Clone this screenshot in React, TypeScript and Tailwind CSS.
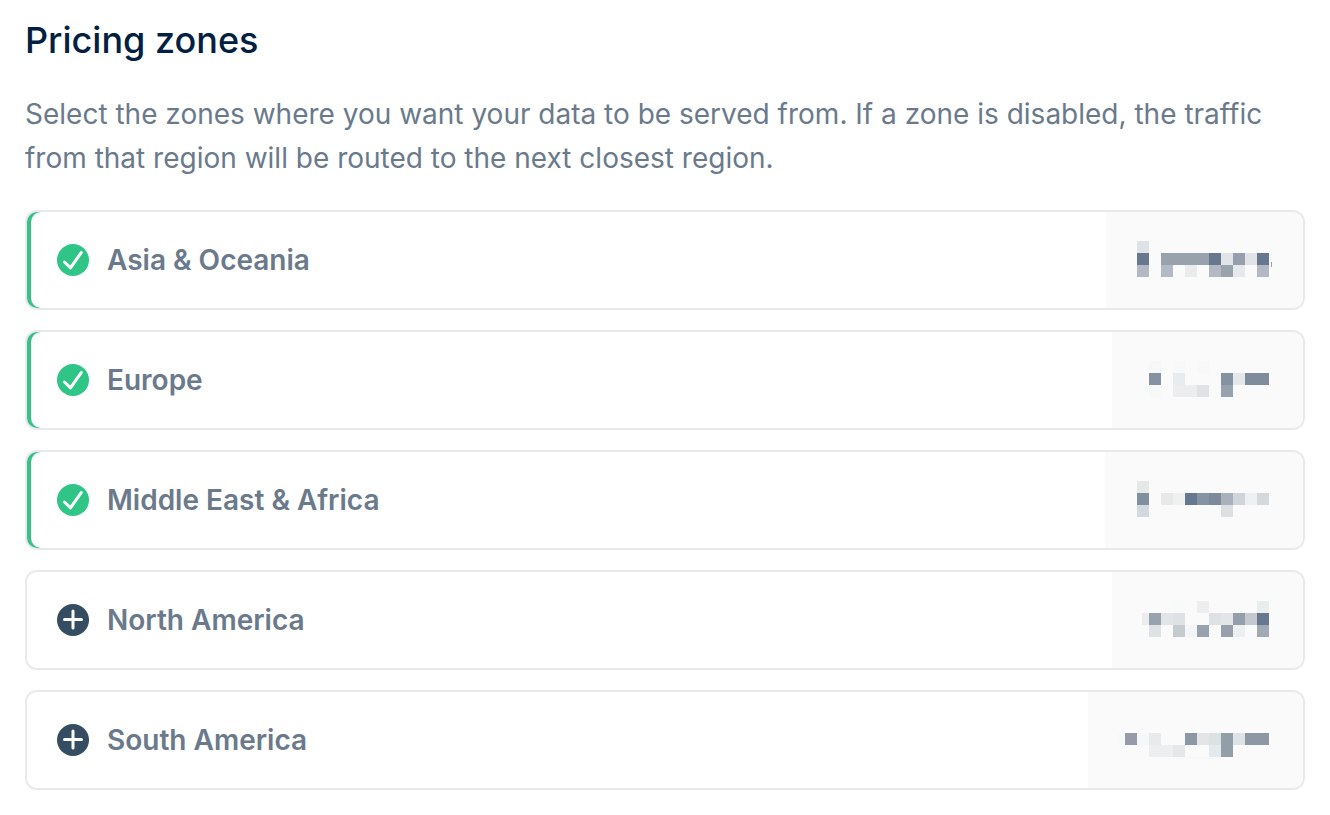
import { useState } from "react";

type Cell = [col: number, row: number, fill: string, span?: number];

type Zone = {
  id: string;
  name: string;
  enabled: boolean;
  priceWidth: number;
  price: Cell[];
  // sliver of the last glyph that sticks out of the mosaic
  sliver?: boolean;
};

const CELL = 12;
// distance from column 0 to the right edge of the price
const MOSAIC_WIDTH = 160;

const ZONES: Zone[] = [
  {
    id: "asia",
    name: "Asia & Oceania",
    enabled: true,
    priceWidth: 137,
    sliver: true,
    price: [
      [2, 0, "#dee3e5"],
      [2, 1, "#66778f"], [4, 1, "#98a2ad", 4], [8, 1, "#66778f"], [9, 1, "#e1e5e7"],
      [10, 1, "#989fac"], [11, 1, "#e1e4e7"], [12, 1, "#66778f"],
      [2, 2, "#b2b9c4"], [4, 2, "#b2bac5"], [6, 2, "#e9ebed"], [8, 2, "#b2b9c4"],
      [9, 2, "#98a3ad"], [10, 2, "#e5e9ed"], [12, 2, "#b2b8c4"],
    ],
  },
  {
    id: "europe",
    name: "Europe",
    enabled: true,
    priceWidth: 131,
    price: [
      [3, 0, "#f6f8f8"], [5, 0, "#f8f8f8"], [7, 0, "#f7f8f8"],
      [3, 1, "#8592a1"], [5, 1, "#e9ecee"], [9, 1, "#8592a1"], [10, 1, "#e4e8ea"], [11, 1, "#7f8c9b", 2],
      [3, 2, "#f7f9f9"], [5, 2, "#ebedef", 2], [7, 2, "#e0e2e5"], [9, 2, "#98a1ae"],
    ],
  },
  {
    id: "mea",
    name: "Middle East & Africa",
    enabled: true,
    priceWidth: 138,
    price: [
      [2, 0, "#e6e8e8"],
      [2, 1, "#7f8f9f"], [4, 1, "#e7e9e9"], [5, 1, "#eff1f1"], [6, 1, "#66778f"], [7, 1, "#8594a3"],
      [8, 1, "#7c8a99"], [9, 1, "#a8b1bc"], [10, 1, "#d0d5db"], [11, 1, "#eef0f1"], [12, 1, "#d5d9db"],
      [2, 2, "#d2d8df"], [9, 2, "#dde0e3"],
    ],
  },
  {
    id: "na",
    name: "North America",
    enabled: false,
    priceWidth: 131,
    price: [
      [5, 0, "#f8f9f9"], [7, 0, "#eceeef"], [12, 0, "#eaedee"],
      [2, 1, "#eceeee"], [3, 1, "#98a1ae"], [4, 1, "#e2e5e7"], [5, 1, "#dfe2e4"], [8, 1, "#dfe1e4"],
      [9, 1, "#e2e6e8"], [10, 1, "#959eab"], [11, 1, "#c4c9ce"], [12, 1, "#66778f"],
      [3, 2, "#dfe2e5"], [5, 2, "#c6cbd0"], [6, 2, "#f3f5f6"], [7, 2, "#98a2ae"],
      [9, 2, "#989faa"], [10, 2, "#edf0f3"], [12, 2, "#a0aab5"],
    ],
  },
  {
    id: "sa",
    name: "South America",
    enabled: false,
    priceWidth: 155,
    price: [
      [0, 1, "#f7f8f9"], [1, 1, "#959ca8"], [2, 1, "#f6f7f9"], [3, 1, "#e8eaec"], [6, 1, "#8c98a3"],
      [7, 1, "#e3e5e7"], [8, 1, "#dce1e3"], [9, 1, "#929ea8"], [10, 1, "#dfe3e7"], [11, 1, "#8d98a3", 2],
      [3, 2, "#eceef0", 2], [5, 2, "#e5e7ea"], [8, 2, "#e4e9ec"], [9, 2, "#929ea8"],
      [5, 3, "#f8f8f9", 4],
    ],
  },
];

function ZoneIcon({ enabled }: { enabled: boolean }) {
  return (
    <svg
      viewBox="0 0 32 32"
      className={`size-8 shrink-0 ${enabled ? "text-[#2fc586]" : "text-[#344d63]"}`}
      fill="none"
      strokeLinecap="round"
      aria-hidden="true"
    >
      <circle cx="16" cy="16" r="16" fill="currentColor" />
      {enabled ? (
        <path d="M7.4 18L13.5 23.8L24.2 8.6" stroke="#fff" strokeWidth="3" strokeLinejoin="round" />
      ) : (
        <path d="M16 7V24M7.5 15.5H24.5" stroke="#fff" strokeWidth="3" />
      )}
    </svg>
  );
}

function HiddenPrice({ width, cells, sliver }: { width: number; cells: Cell[]; sliver?: boolean }) {
  return (
    <svg
      width={width}
      height={38}
      viewBox={`${MOSAIC_WIDTH - width} 0 ${width} 38`}
      shapeRendering="crispEdges"
      aria-hidden="true"
    >
      {cells.map(([col, row, fill, span = 1]) => (
        <rect key={`${col}-${row}`} x={col * CELL} y={row * CELL} width={span * CELL} height={CELL} fill={fill} />
      ))}
      {sliver && <rect x={158} y={21} width={1} height={5} fill="#9aa3ad" />}
    </svg>
  );
}

export default function App() {
  const [zones, setZones] = useState(ZONES);

  const toggle = (id: string) => {
    setZones((prev) => prev.map((z) => (z.id === id ? { ...z, enabled: !z.enabled } : z)));
  };

  return (
    <main className="bg-white px-[25px] pt-4 pb-6 font-['Inter',sans-serif] text-[#6a7a8c]">
      <h1 className="text-[36px] leading-[48px] font-medium text-[#02203f]">Pricing zones</h1>
      <p className="mt-7 text-[28px] leading-[44px]">
        Select the zones where you want your data to be served from. If a zone is disabled, the traffic
        from that region will be routed to the next closest region.
      </p>

      <div className="mt-[30px] flex flex-col gap-5">
        {zones.map((zone) => (
          <button
            key={zone.id}
            type="button"
            aria-pressed={zone.enabled}
            onClick={() => toggle(zone.id)}
            className="flex h-[100px] w-full cursor-pointer overflow-hidden rounded-xl border-2 border-[#e8eaea] text-left"
          >
            <span className={`flex h-full flex-1 pl-1 ${zone.enabled ? "bg-[#37c08a]" : "bg-white"}`}>
              <span className="flex flex-1 items-center gap-[18px] rounded-l-[10px] bg-white pl-[26px]">
                <ZoneIcon enabled={zone.enabled} />
                <span className="text-[28px] leading-[44px] font-semibold">{zone.name}</span>
              </span>
            </span>
            <span className="flex h-full items-center bg-[#fafafa] px-[30px]">
              <HiddenPrice width={zone.priceWidth} cells={zone.price} sliver={zone.sliver} />
            </span>
          </button>
        ))}
      </div>
    </main>
  );
}
